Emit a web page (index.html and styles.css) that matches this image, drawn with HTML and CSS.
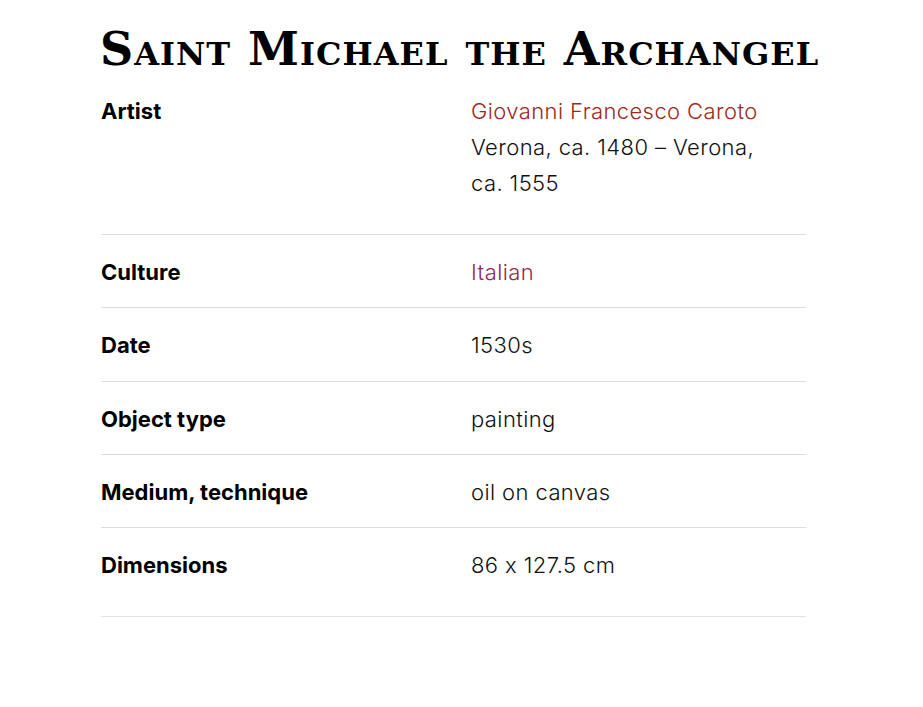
FILE: index.html
```html
<!DOCTYPE html>
<html lang="en">
<head>
<meta charset="utf-8">
<title>Saint Michael the Archangel</title>
<link rel="stylesheet" href="styles.css">
</head>
<body>
<main class="object">
  <h1 class="title">Saint Michael the Archangel</h1>
  <dl class="details">
    <div class="row row-first">
      <dt class="label">Artist</dt>
      <dd class="value"><a class="link link-artist" href="#">Giovanni Francesco Caroto</a><br>Verona, ca. 1480 – Verona, ca. 1555</dd>
    </div>
    <div class="row">
      <dt class="label">Culture</dt>
      <dd class="value"><a class="link link-culture" href="#">Italian</a></dd>
    </div>
    <div class="row">
      <dt class="label">Date</dt>
      <dd class="value">1530s</dd>
    </div>
    <div class="row">
      <dt class="label">Object type</dt>
      <dd class="value">painting</dd>
    </div>
    <div class="row">
      <dt class="label">Medium, technique</dt>
      <dd class="value">oil on canvas</dd>
    </div>
    <div class="row row-last">
      <dt class="label">Dimensions</dt>
      <dd class="value">86 x 127.5 cm</dd>
    </div>
  </dl>
</main>
</body>
</html>
```
FILE: styles.css
```css
html, body {
  margin: 0;
  padding: 0;
  background: #ffffff;
}
body {
  font-family: Inter, "Liberation Sans", sans-serif;
  color: #000;
}
.object {
  width: 705px;
  margin: 0 0 0 101px;
  padding-top: 23px;
}
.title {
  margin: 0 0 0 -1px;
  font-family: "DejaVu Serif", serif;
  font-variant: small-caps;
  font-weight: bold;
  font-size: 46px;
  line-height: 52px;
  letter-spacing: 1px;
  white-space: nowrap;
}
.details {
  margin: 18px 0 0 0;
  padding: 0;
}
.row {
  display: grid;
  grid-template-columns: 370px 300px;
  padding: 19px 0 17.25px;
  border-bottom: 1px solid #dcdcdc;
  font-size: 22px;
  line-height: 36px;
}
.row-first {
  padding-top: 0;
  padding-bottom: 33px;
}
.row-last {
  padding-bottom: 33px;
  border-bottom-color: #e2e2e2;
}
.label {
  font-weight: 700;
}
.value {
  margin: 0;
  font-weight: 300;
  letter-spacing: 0.4px;
  color: #111;
}
.link {
  text-decoration: none;
}
.link-artist {
  color: #9b2a22;
}
.link-culture {
  color: #8f2c52;
}
```
